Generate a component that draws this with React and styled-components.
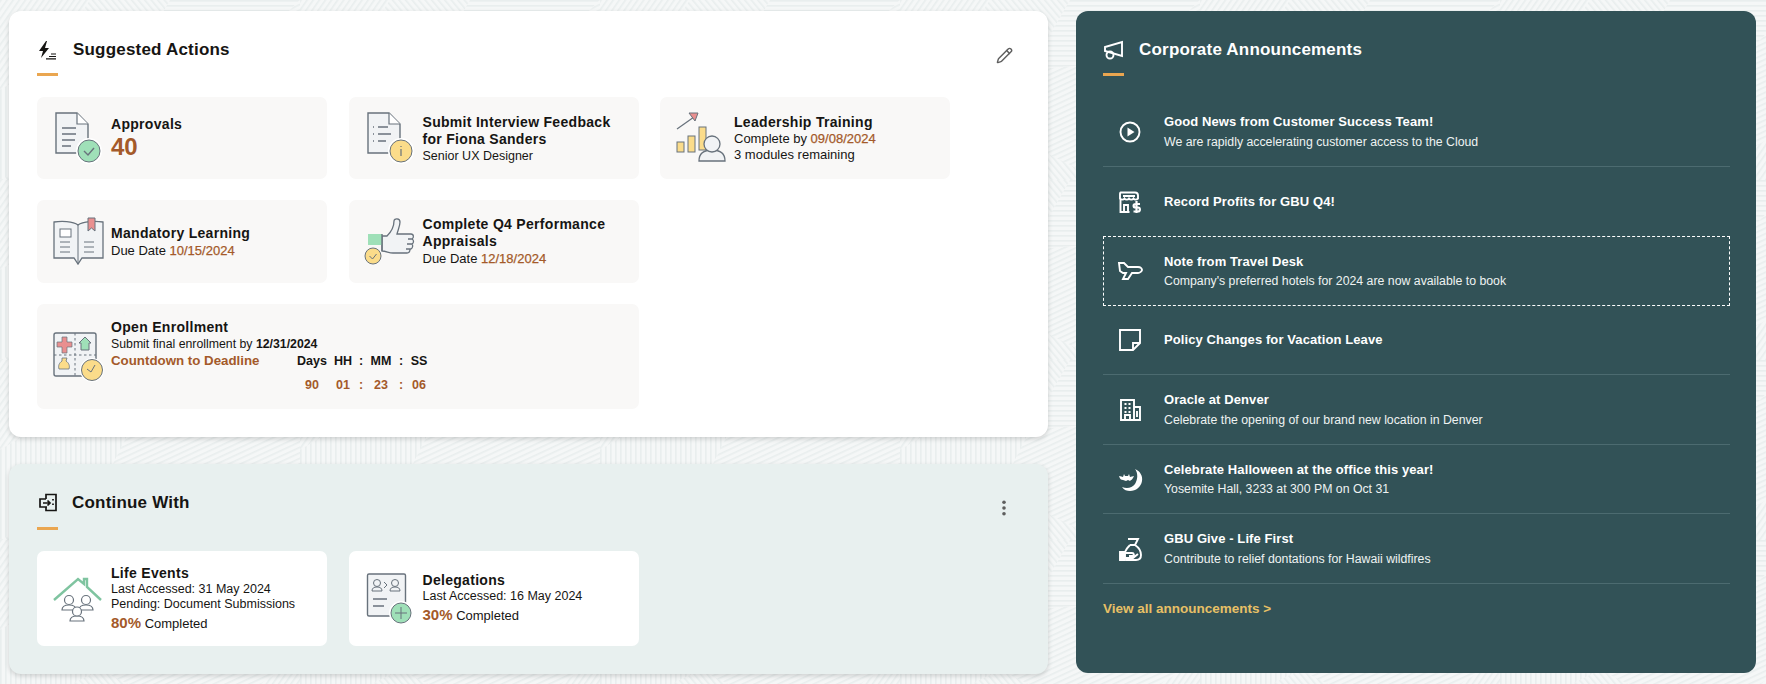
import React from 'react';
import styled, { createGlobalStyle } from 'styled-components';
import { Pencil } from 'lucide-react';

const patch = (pts, id) => `<polygon points="${pts}" fill="url(#${id})"/>`;
const stripes = (id, angle) => `<pattern id="${id}" width="5" height="5" patternUnits="userSpaceOnUse" patternTransform="rotate(${angle})"><rect width="5" height="5" fill="#f5f7f7"/><rect width="1.6" height="5" fill="#e9eeee"/></pattern>`;
const tile = `<svg xmlns="http://www.w3.org/2000/svg" width="300" height="180"><defs>${stripes('a', 35)}${stripes('b', -40)}${stripes('c', 90)}${stripes('d', 0)}${stripes('e', 65)}</defs>${patch('0,0 90,0 50,60 0,90', 'a')}${patch('90,0 170,0 130,70 50,60', 'b')}${patch('170,0 300,0 240,60 130,70', 'c')}${patch('0,90 50,60 130,70 100,130 0,180', 'd')}${patch('130,70 240,60 300,0 300,120 200,180 100,130', 'e')}${patch('0,180 100,130 200,180', 'b')}${patch('200,180 300,120 300,180', 'a')}</svg>`;

const GlobalStyle = createGlobalStyle`
  html, body {
    margin: 0;
    height: 100%;
  }
  body {
    font-family: "Liberation Sans", Arial, sans-serif;
    color: #161513;
    background-color: #f5f7f7;
    background-image: url("data:image/svg+xml,${encodeURIComponent(tile)}");
  }
  * {
    box-sizing: border-box;
  }
`;

const Page = styled.div`
  display: grid;
  grid-template-columns: 1039px 680px;
  column-gap: 28px;
  padding: 11px 10px 10px 9px;
  width: 1766px;
  height: 684px;
  overflow: hidden;
`;

const LeftColumn = styled.div`
  display: flex;
  flex-direction: column;
  gap: 27px;
`;

const Panel = styled.section`
  position: relative;
  background: ${(p) => p.$bg};
  border-radius: 12px;
  padding: ${(p) => p.$top}px 28px 28px 28px;
  box-shadow: 0 2px 5px rgba(0, 0, 0, 0.16);
`;

const DarkPanel = styled.section`
  background: #325257;
  border-radius: 12px;
  padding: 26px 26px 0 27px;
  height: 662px;
  color: #fff;
`;

const HeaderRow = styled.div`
  display: flex;
  align-items: center;
  gap: ${(p) => p.$gap}px;
  height: 26px;
`;

const PanelTitle = styled.h2`
  margin: 0;
  font-size: 17px;
  font-weight: 700;
  letter-spacing: 0.2px;
  color: ${(p) => p.$color || '#161513'};
`;

const Accent = styled.div`
  width: 21px;
  height: 3px;
  margin: ${(p) => p.$mt}px 0 21px;
  background: #eaa650;
`;

const CornerButton = styled.button`
  position: absolute;
  top: 33px;
  right: 33px;
  width: 22px;
  height: 22px;
  padding: 0;
  border: 0;
  background: transparent;
  color: #5e5e5e;
  display: flex;
  align-items: center;
  justify-content: center;
`;

const CardGrid = styled.div`
  display: grid;
  grid-template-columns: repeat(3, 290px);
  gap: 21px 21.5px;
`;

const Card = styled.div`
  display: flex;
  align-items: center;
  gap: 6px;
  padding-left: 14px;
  height: ${(p) => p.$h}px;
  border-radius: 7px;
  background: ${(p) => p.$bg || '#f9f8f7'};
  grid-column: ${(p) => (p.$wide ? 'span 2' : 'auto')};
`;

const CardIcon = styled.svg`
  flex: 0 0 54px;
  width: 54px;
  height: 54px;
`;

const CardBody = styled.div`
  display: flex;
  flex-direction: column;
  padding-top: ${(p) => p.$pt || 0}px;
`;

const CardTitle = styled.div`
  font-size: 14px;
  line-height: 17px;
  font-weight: 700;
  letter-spacing: 0.3px;
`;

const CardText = styled.div`
  font-size: ${(p) => p.$size || 12.5}px;
  line-height: ${(p) => p.$lh || 17}px;
`;

const Hl = styled.span`
  color: #a45a2a;
  font-weight: ${(p) => (p.$bold ? 700 : 400)};
  font-size: ${(p) => (p.$size ? `${p.$size}px` : 'inherit')};
  -webkit-text-stroke: ${(p) => (p.$bold ? '0' : '0.25px')};
`;

const BigCount = styled.div`
  font-size: 24px;
  line-height: 27px;
  font-weight: 700;
  color: #a45a2a;
`;

const CountdownRow = styled.div`
  display: flex;
`;

const CountdownLabel = styled.div`
  width: 185px;
  font-size: 13.3px;
  line-height: 18px;
  font-weight: 700;
  color: #a45a2a;
`;

const CountdownTable = styled.div`
  display: grid;
  grid-template-columns: 32px 30px 6px 34px 6px 30px;
  grid-auto-rows: 24px;
  text-align: center;
`;

const CountCell = styled.div`
  font-size: 12.5px;
  line-height: 18px;
  font-weight: 700;
  color: ${(p) => (p.$value ? '#a45a2a' : '#161513')};
`;

const AnnouncementList = styled.div`
  display: grid;
  grid-auto-rows: 69.5px;
`;

const Announcement = styled.div`
  display: flex;
  align-items: center;
  gap: 21px;
  padding: 1px 0 0 14px;
  border-bottom: ${(p) => (p.$divider ? '1px solid #4c6b70' : '0')};
  outline: ${(p) => (p.$focused ? '1px dashed #fff' : '0')};
  outline-offset: -1px;
`;

const AnnIcon = styled.svg`
  flex: 0 0 26px;
  width: 26px;
  height: 26px;
  fill: none;
  stroke: #fff;
  stroke-width: 1.9;
`;

const AnnTitle = styled.div`
  font-size: 13px;
  line-height: 18px;
  font-weight: 700;
  letter-spacing: 0.1px;
`;

const AnnText = styled.div`
  font-size: 12.3px;
  line-height: 18px;
  margin-top: 1.5px;
  color: #eef2f2;
`;

const ViewAll = styled.a`
  display: block;
  margin-top: 16px;
  font-size: 13.5px;
  line-height: 18px;
  font-weight: 700;
  color: #e7c066;
`;

const line = '#68727c';
const sheet = '#f1f3f5';
const green = '#9fe0b8';
const yellow = '#fbdc8a';
const pink = '#e98f8f';

const Doc = ({ children }) => (
  <>
    <path d="M5 2h21l11 11v29H5z" fill={sheet} stroke={line} strokeWidth="1.4" />
    <path d="M26 2v11h11" fill="#fff" stroke={line} strokeWidth="1.2" />
    {children}
  </>
);

const ApprovalsIcon = () => (
  <CardIcon viewBox="0 0 54 54">
    <Doc>
      <path d="M11 17h14M11 23h14M11 29h13M11 35h9" stroke={line} strokeWidth="1.5" />
    </Doc>
    <circle cx="38" cy="40" r="13" fill="#fff" />
    <circle cx="38" cy="40" r="11" fill={green} stroke={line} />
    <path d="M33 40l4 4 6-7" fill="none" stroke={line} strokeWidth="1.4" />
  </CardIcon>
);

const FeedbackIcon = () => (
  <CardIcon viewBox="0 0 54 54">
    <Doc>
      <path d="M10 16h1M15 16h10M10 23h1M15 23h13M10 30h1M15 30h8" stroke={line} strokeWidth="1.4" />
    </Doc>
    <circle cx="38" cy="40" r="13" fill="#fff" />
    <circle cx="38" cy="40" r="11" fill={yellow} stroke={line} />
    <path d="M38 38v7M38 35v1" stroke={line} strokeWidth="1.2" />
  </CardIcon>
);

const TrainingIcon = () => (
  <CardIcon viewBox="0 0 54 54">
    <path d="M3 18L20 6" stroke={line} strokeWidth="1.2" />
    <path d="M15 2h9l-3 8z" fill={pink} stroke={line} />
    <rect x="3" y="31" width="7" height="10" fill={yellow} stroke={line} />
    <rect x="14" y="25" width="7" height="16" fill={yellow} stroke={line} />
    <rect x="25" y="16" width="7" height="23" fill={yellow} stroke={line} />
    <path d="M25 50c0-8 5-11 13-11s13 3 13 11z" fill={sheet} stroke={line} strokeWidth="1.3" />
    <circle cx="38" cy="33" r="8" fill={sheet} stroke={line} strokeWidth="1.3" />
  </CardIcon>
);

const LearningIcon = () => (
  <CardIcon viewBox="0 0 54 54">
    <path d="M27 10C22 6 10 6 3 7v36h20l4 6 4-6h21V7c-7-1-20-1-25 3z" fill={sheet} stroke={line} strokeWidth="1.3" />
    <path d="M27 10v38" stroke={line} />
    <rect x="9" y="14" width="11" height="8" fill="#fff" stroke={line} />
    <path d="M9 27h10M9 32h10M9 37h10M33 27h10M33 32h10M33 37h10" stroke={line} />
    <path d="M37 3h7v13l-3.500-3-3.500 3z" fill={pink} stroke={line} />
  </CardIcon>
);

const AppraisalIcon = () => (
  <CardIcon viewBox="0 0 54 54">
    <path d="M19 21h5c4-4 7-10 7-15 0-3 6-3 6 1 0 4-2 8-3 12h14c3 0 3 4 1 5h-4 4c2 1 2 4 0 5h-5 5c1 1 1 4-1 5h-5 4c0 2-1 4-3 4H30c-4 0-7-2-11-2z" fill={sheet} stroke={line} strokeWidth="1.3" />
    <rect x="5" y="19" width="14" height="11" fill={green} />
    <path d="M19 19v17" stroke={line} strokeWidth="1.4" />
    <circle cx="10" cy="41" r="8" fill={yellow} stroke={line} />
    <path d="M6.500 41l3 3 4-5" fill="none" stroke={line} />
  </CardIcon>
);

const EnrollmentIcon = () => (
  <CardIcon viewBox="0 0 54 54">
    <rect x="3" y="3" width="42" height="43" rx="2" fill={sheet} stroke={line} strokeWidth="1.4" />
    <path d="M24 3v43M3 25h42" stroke={line} strokeDasharray="2.5 2.5" />
    <path d="M11 7h5v5h5v5h-5v6h-5v-6H6v-5h5z" fill={pink} stroke={line} strokeWidth=".7" />
    <path d="M34 7l6 6h-2v7h-8v-7h-2z" fill={green} stroke={line} />
    <path d="M11 28h5l-1 3c3 2 4 5 3 8h-10c-1-3 0-6 3-8z" fill={yellow} stroke={line} strokeWidth=".8" />
    <circle cx="41" cy="40" r="12" fill="#fff" />
    <circle cx="41" cy="40" r="10.500" fill={yellow} stroke={line} />
    <path d="M36 39l4 3 4-7" fill="none" stroke={line} />
  </CardIcon>
);

const LifeEventsIcon = () => (
  <CardIcon viewBox="0 0 54 54">
    <path d="M3 28L27 7l6 5V7h3v8l14 13" fill="none" stroke="#7fc4a0" strokeWidth="2.4" />
    <g fill="#fff" stroke={line} strokeWidth="1.2">
      <path d="M11 38c0-4 3-5 7-5s7 1 7 5z" />
      <circle cx="18" cy="28" r="4.500" />
      <path d="M28 38c0-4 3-5 7-5s7 1 7 5z" />
      <circle cx="35" cy="28" r="4.500" />
      <path d="M19 49c0-4 3-5 7-5s7 1 7 5z" />
      <circle cx="26" cy="39.500" r="4.500" />
    </g>
  </CardIcon>
);

const DelegationsIcon = () => (
  <CardIcon viewBox="0 0 54 54">
    <rect x="4.500" y="2" width="38" height="42" rx="1.500" fill={sheet} stroke={line} strokeWidth="1.4" />
    <g fill="none" stroke={line}>
      <circle cx="14" cy="11" r="3.500" />
      <path d="M9 19c0-3 2-4 5-4s5 1 5 4z" />
      <circle cx="32" cy="11" r="3.500" />
      <path d="M27 19c0-3 2-4 5-4s5 1 5 4z" />
      <path d="M21 10l3 3-3 3" />
    </g>
    <path d="M10 27h14M10 34h11" stroke={line} strokeWidth="1.5" />
    <circle cx="38" cy="41" r="12" fill="#fff" />
    <circle cx="38" cy="41" r="10" fill={green} stroke={line} />
    <path d="M38 35v12M32 41h12" stroke={line} />
  </CardIcon>
);

const BoltIcon = () => (
  <svg width="22" height="22" viewBox="0 0 22 22">
    <path d="M9 2L2 12h4l-2 7 8-10H8l2-7z" fill="#161513" />
    <path d="M14 15h5M12 17.500h7M9 19.800h10" stroke="#161513" strokeWidth="1.2" />
  </svg>
);

const ContinueIcon = () => (
  <svg width="22" height="22" viewBox="0 0 22 22" fill="none" stroke="#161513" strokeWidth="1.7">
    <path d="M9 7V2.500h10v16H9V15" />
    <path d="M9 7H3v8h7M6 11h7M10.500 8.500l2.500 2.500-2.500 2.500" />
    <path d="M16 7v1.500M16 11.500V13" />
  </svg>
);

const MegaphoneIcon = () => (
  <svg width="21" height="21" viewBox="0 0 21 21" fill="none" stroke="#fff" strokeWidth="1.9">
    <path d="M19 2v14L2 11V7z" />
    <circle cx="7" cy="15" r="3.500" />
  </svg>
);

const Kebab = () => (
  <svg width="6" height="18" viewBox="0 0 6 18" fill="#5e5e5e">
    <circle cx="3" cy="3.300" r="1.800" />
    <circle cx="3" cy="9" r="1.800" />
    <circle cx="3" cy="14.700" r="1.800" />
  </svg>
);

const PlayIcon = () => (
  <AnnIcon viewBox="0 0 26 26">
    <circle cx="13" cy="13" r="9.500" />
    <path d="M10.500 8.500l7 4.500-7 4.500z" fill="#fff" stroke="none" />
  </AnnIcon>
);

const StoreIcon = () => (
  <AnnIcon viewBox="0 0 26 26">
    <path d="M3.500 3.500h14.500c2 0 3 1 3 3v3c-1.500 1.500-3.500 1.500-4.500 0-1 1.500-3.500 1.500-4.500 0-1 1.500-3.500 1.500-4.500 0-1 1.500-3.500 1.500-4.500 0v-3c0-2 0-3 .5-3z" />
    <path d="M3.500 10v13h9M6 7h12M7 23v-7h4v7" />
    <path d="M19.500 12v12M23 15h-4.500c-2.500 0-2.500 3.500 0 3.500h2.500c2.500 0 2.500 4 0 4h-4.500" strokeWidth="2.200" />
  </AnnIcon>
);

const PlaneIcon = () => (
  <AnnIcon viewBox="0 0 26 26">
    <path d="M2 5h5l4 4h10c3 0 4 2 4 3s-2 3-4 3h-6l-4 6H6l3-6H6L3 13z" />
  </AnnIcon>
);

const NoteIcon = () => (
  <AnnIcon viewBox="0 0 26 26">
    <path d="M3 3h20v13l-7 7H3zM23 16h-7v7" />
  </AnnIcon>
);

const BuildingIcon = () => (
  <AnnIcon viewBox="0 0 26 26">
    <path d="M4 3h13v20H4zM17 10h6v13h-6M8 23v-5h5v5" />
    <path d="M7.500 7h2M11.500 7h2M7.500 11h2M11.500 11h2M7.500 15h2M11.500 15h2M20 14v6" />
  </AnnIcon>
);

const MoonIcon = () => (
  <AnnIcon viewBox="0 0 26 26">
    <path d="M18 3c5 2 8 7 7 12-1 6-6 10-12 10-3 0-6-1-8-4 5 2 10 1 13-3 3-5 3-11 0-15z" fill="#fff" stroke="none" />
    <path d="M2 10c2 0 3 1 4 1l1-3 1 2h3l1-2 1 3c1 0 3-1 4-1-1 2-2 4-3 4l-1 1-2-1-2 1-3-1c-2 0-3-1-4-4z" fill="#fff" stroke="none" />
  </AnnIcon>
);

const GiveIcon = () => (
  <AnnIcon viewBox="0 0 26 26">
    <path d="M11 3h10l-3 6c3 2 6 6 6 10 0 3-2 5-5 5H9M13 9h5M13 9c-2 2-4 4-5 7" />
    <path d="M3 16h5v8H3z" fill="#fff" />
    <path d="M8 17h7c2 0 3 3 0 3h-3M8 22h8l5-4" />
  </AnnIcon>
);

const announcements = [
  { icon: PlayIcon, title: 'Good News from Customer Success Team!', text: 'We are rapidly accelerating customer access to the Cloud', divider: true },
  { icon: StoreIcon, title: 'Record Profits for GBU Q4!' },
  { icon: PlaneIcon, title: 'Note from Travel Desk', text: "Company's preferred hotels for 2024 are now available to book", focused: true },
  { icon: NoteIcon, title: 'Policy Changes for Vacation Leave', divider: true },
  { icon: BuildingIcon, title: 'Oracle at Denver', text: 'Celebrate the opening of our brand new location in Denver', divider: true },
  { icon: MoonIcon, title: 'Celebrate Halloween at the office this year!', text: 'Yosemite Hall, 3233 at 300 PM on Oct 31', divider: true },
  { icon: GiveIcon, title: 'GBU Give - Life First', text: 'Contribute to relief dontations for Hawaii wildfires', divider: true },
];

export default function App() {
  return (
    <>
      <GlobalStyle />
      <Page>
        <LeftColumn>
          <Panel $bg="#fff" $top={26}>
            <HeaderRow $gap={14}>
              <BoltIcon />
              <PanelTitle>Suggested Actions</PanelTitle>
            </HeaderRow>
            <CornerButton>
              <Pencil size={17} strokeWidth={2} />
            </CornerButton>
            <Accent $mt={10} />
            <CardGrid>
              <Card $h={82}>
                <ApprovalsIcon />
                <CardBody>
                  <CardTitle>Approvals</CardTitle>
                  <BigCount>40</BigCount>
                </CardBody>
              </Card>
              <Card $h={82}>
                <FeedbackIcon />
                <CardBody $pt={1}>
                  <CardTitle>Submit Interview Feedback<br />for Fiona Sanders</CardTitle>
                  <CardText $lh={16}>Senior UX Designer</CardText>
                </CardBody>
              </Card>
              <Card $h={82}>
                <TrainingIcon />
                <CardBody $pt={1}>
                  <CardTitle>Leadership Training</CardTitle>
                  <CardText $size={13} $lh={16.5}>Complete by <Hl>09/08/2024</Hl></CardText>
                  <CardText $size={13} $lh={16.5}>3 modules remaining</CardText>
                </CardBody>
              </Card>
              <Card $h={83}>
                <LearningIcon />
                <CardBody>
                  <CardTitle>Mandatory Learning</CardTitle>
                  <CardText $size={13}>Due Date <Hl>10/15/2024</Hl></CardText>
                </CardBody>
              </Card>
              <Card $h={83}>
                <AppraisalIcon />
                <CardBody>
                  <CardTitle>Complete Q4 Performance<br />Appraisals</CardTitle>
                  <CardText $size={13}>Due Date <Hl>12/18/2024</Hl></CardText>
                </CardBody>
              </Card>
              <Card $h={105} $wide>
                <EnrollmentIcon />
                <CardBody $pt={6}>
                  <CardTitle>Open Enrollment</CardTitle>
                  <CardText $size={12.3} $lh={16}>Submit final enrollment by <b>12/31/2024</b></CardText>
                  <CountdownRow>
                    <CountdownLabel>Countdown to Deadline</CountdownLabel>
                    <CountdownTable>
                      {['Days', 'HH', ':', 'MM', ':', 'SS'].map((h, i) => (
                        <CountCell key={i}>{h}</CountCell>
                      ))}
                      {['90', '01', ':', '23', ':', '06'].map((v, i) => (
                        <CountCell key={i} $value>{v}</CountCell>
                      ))}
                    </CountdownTable>
                  </CountdownRow>
                </CardBody>
              </Card>
            </CardGrid>
          </Panel>
          <Panel $bg="#e8f0ef" $top={26}>
            <HeaderRow $gap={13}>
              <ContinueIcon />
              <PanelTitle>Continue With</PanelTitle>
            </HeaderRow>
            <CornerButton>
              <Kebab />
            </CornerButton>
            <Accent $mt={11} />
            <CardGrid>
              <Card $h={95} $bg="#fff">
                <LifeEventsIcon />
                <CardBody>
                  <CardTitle>Life Events</CardTitle>
                  <CardText $lh={15.5}>Last Accessed: 31 May 2024</CardText>
                  <CardText $lh={15.5}>Pending: Document Submissions</CardText>
                  <CardText $size={13} $lh={19}><Hl $bold $size={15}>80%</Hl> Completed</CardText>
                </CardBody>
              </Card>
              <Card $h={95} $bg="#fff">
                <DelegationsIcon />
                <CardBody>
                  <CardTitle>Delegations</CardTitle>
                  <CardText $lh={15.5}>Last Accessed: 16 May 2024</CardText>
                  <CardText $size={13} $lh={19}><Hl $bold $size={15}>30%</Hl> Completed</CardText>
                </CardBody>
              </Card>
            </CardGrid>
          </Panel>
        </LeftColumn>
        <DarkPanel>
          <HeaderRow $gap={15}>
            <MegaphoneIcon />
            <PanelTitle $color="#fff">Corporate Announcements</PanelTitle>
          </HeaderRow>
          <Accent $mt={10} />
          <AnnouncementList>
            {announcements.map((a) => {
              const Icon = a.icon;
              return (
                <Announcement key={a.title} $divider={a.divider} $focused={a.focused}>
                  <Icon />
                  <div>
                    <AnnTitle>{a.title}</AnnTitle>
                    {a.text && <AnnText>{a.text}</AnnText>}
                  </div>
                </Announcement>
              );
            })}
          </AnnouncementList>
          <ViewAll>View all announcements &gt;</ViewAll>
        </DarkPanel>
      </Page>
    </>
  );
}
